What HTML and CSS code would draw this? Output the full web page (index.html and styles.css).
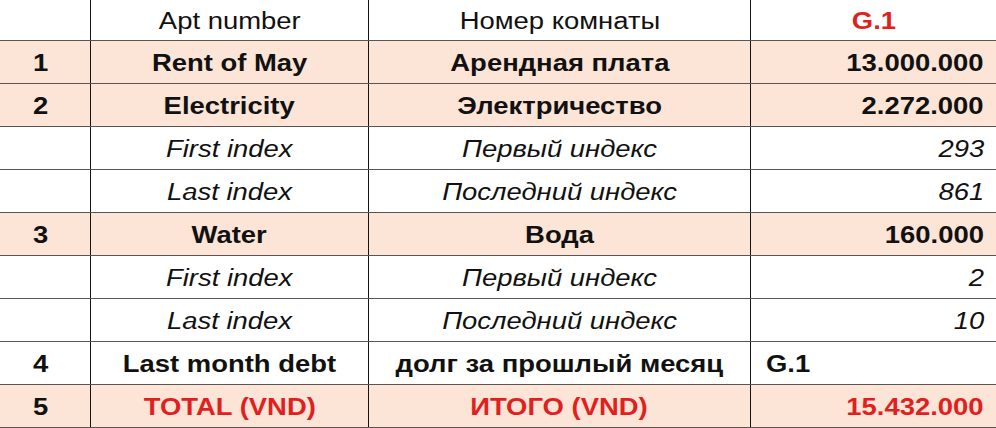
FILE: index.html
```html
<!DOCTYPE html>
<html lang="en">
<head>
<meta charset="utf-8">
<title>Rent bill</title>
<link rel="stylesheet" href="styles.css">
</head>
<body>
<div class="sheet">
  <div class="row head">
    <div class="cell num"><span></span></div>
    <div class="cell mid"><span>Apt number</span></div>
    <div class="cell mid"><span>Номер комнаты</span></div>
    <div class="cell mid red strong"><span>G.1</span></div>
  </div>
  <div class="row pink bold">
    <div class="cell num"><span>1</span></div>
    <div class="cell mid"><span>Rent of May</span></div>
    <div class="cell mid"><span>Арендная плата</span></div>
    <div class="cell end"><span>13.000.000</span></div>
  </div>
  <div class="row pink bold">
    <div class="cell num"><span>2</span></div>
    <div class="cell mid"><span>Electricity</span></div>
    <div class="cell mid"><span>Электричество</span></div>
    <div class="cell end"><span>2.272.000</span></div>
  </div>
  <div class="row ital">
    <div class="cell num"><span></span></div>
    <div class="cell mid"><span>First index</span></div>
    <div class="cell mid"><span>Первый индекс</span></div>
    <div class="cell end"><span>293</span></div>
  </div>
  <div class="row ital">
    <div class="cell num"><span></span></div>
    <div class="cell mid"><span>Last index</span></div>
    <div class="cell mid"><span>Последний индекс</span></div>
    <div class="cell end"><span>861</span></div>
  </div>
  <div class="row pink bold">
    <div class="cell num"><span>3</span></div>
    <div class="cell mid"><span>Water</span></div>
    <div class="cell mid"><span>Вода</span></div>
    <div class="cell end"><span>160.000</span></div>
  </div>
  <div class="row ital">
    <div class="cell num"><span></span></div>
    <div class="cell mid"><span>First index</span></div>
    <div class="cell mid"><span>Первый индекс</span></div>
    <div class="cell end"><span>2</span></div>
  </div>
  <div class="row ital">
    <div class="cell num"><span></span></div>
    <div class="cell mid"><span>Last index</span></div>
    <div class="cell mid"><span>Последний индекс</span></div>
    <div class="cell end"><span>10</span></div>
  </div>
  <div class="row bold">
    <div class="cell num"><span>4</span></div>
    <div class="cell mid"><span>Last month debt</span></div>
    <div class="cell mid"><span>долг за прошлый месяц</span></div>
    <div class="cell start"><span>G.1</span></div>
  </div>
  <div class="row pink bold">
    <div class="cell num"><span>5</span></div>
    <div class="cell mid red"><span>TOTAL (VND)</span></div>
    <div class="cell mid red"><span>ИТОГО (VND)</span></div>
    <div class="cell end red"><span>15.432.000</span></div>
  </div>
</div>
</body>
</html>
```

FILE: styles.css
```css
html, body {
  margin: 0;
  padding: 0;
  background: #ffffff;
}

.sheet {
  width: 996px;
  height: 428px;
  overflow: hidden;
  font-family: "Liberation Sans", Arial, sans-serif;
  font-size: 23.5px;
  color: #111111;
}

.row {
  display: grid;
  grid-template-columns: 91px 278px 382px 1fr;
  height: 43px;
  box-sizing: border-box;
  border-bottom: 1px solid #5a5552;
}

.row.head {
  height: 41px;
}

.row.pink {
  background: #fce4d6;
}

.row.bold {
  font-weight: bold;
}

.row.ital {
  font-style: italic;
}

.cell {
  display: flex;
  align-items: center;
  box-sizing: border-box;
  border-right: 1px solid #141414;
  padding-top: 3px;
  white-space: nowrap;
}

.cell:last-child {
  border-right: none;
}

.cell span {
  display: inline-block;
  transform: scaleX(1.167);
}

.cell.strong {
  font-weight: bold;
}

.cell.num {
  justify-content: center;
  padding-right: 8px;
  font-weight: bold;
  font-style: normal;
}

.cell.mid {
  justify-content: center;
}

.cell.mid span {
  transform-origin: center;
}

.cell.end {
  justify-content: flex-end;
  padding-right: 12px;
}

.cell.end span {
  transform-origin: right center;
}

.cell.start {
  justify-content: flex-start;
  padding-left: 15px;
}

.cell.start span {
  transform-origin: left center;
}

.red {
  color: #e01f1f;
}
```
